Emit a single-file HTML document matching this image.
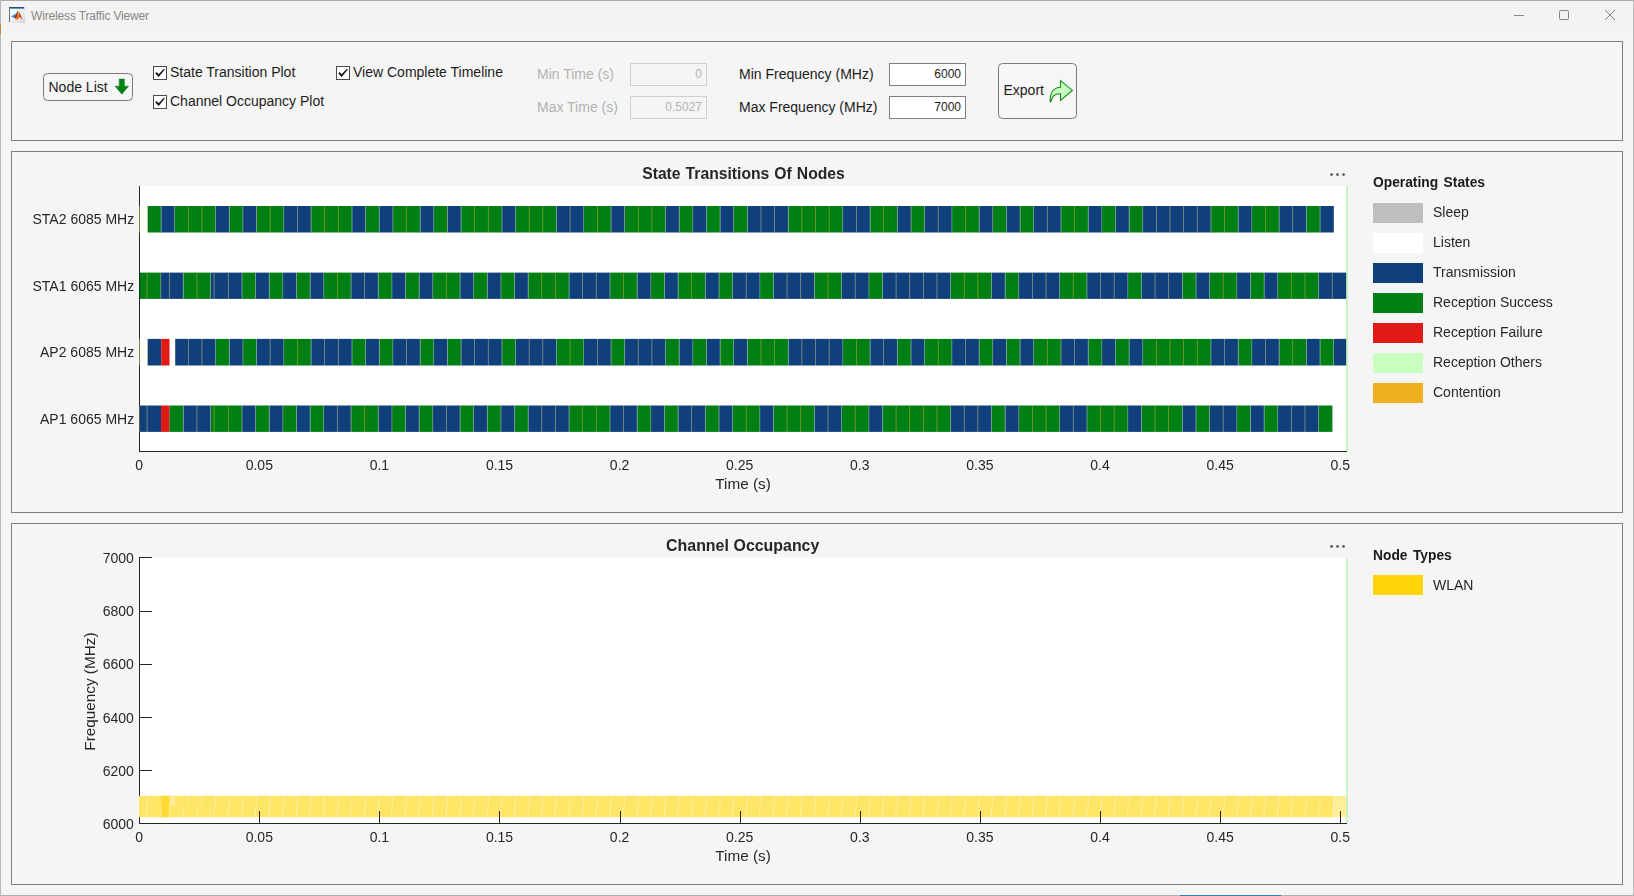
<!DOCTYPE html>
<html lang="en">
<head>
<meta charset="utf-8">
<title>Wireless Traffic Viewer</title>
<style>
html,body{margin:0;padding:0}
body{width:1634px;height:896px;overflow:hidden;position:relative;background:#F5F5F5;
 font-family:"Liberation Sans",sans-serif;font-size:14px;color:#1c1c1c}
.abs{position:absolute}
#titlebar{left:0;top:0;width:1634px;height:31px;background:#F3F3F3}
#wtitle{left:31px;top:8.7px;font-size:12px;letter-spacing:-0.16px;line-height:15px;color:#868686;white-space:nowrap}
.edge{background:#BDBDBD}
.panel{border:1px solid #7f7f7f;box-sizing:border-box;left:11px;width:1612px}
.cb{width:14px;height:14px;box-sizing:border-box;border:1px solid #4a4a4a;background:#fff}
.lbl{white-space:nowrap;line-height:16px;height:16px}
.dis{color:#b3b3b3}
.inp{box-sizing:border-box;width:77px;height:23px;border:1px solid #7f7f7f;background:#fff;
 font-size:12px;line-height:21px;text-align:right;padding-right:4px;color:#1c1c1c}
.inp.dis{border-color:#cfcfcf;background:#F5F5F5;color:#b3b3b3}
.btn{box-sizing:border-box;border:1px solid #7a7a7a;border-radius:4.5px;background:#F6F6F6}
</style>
</head>
<body>
<div id="titlebar" class="abs"></div>
<div class="abs edge" style="left:0;top:0;width:1634px;height:1px;background:#ABABAB"></div>
<div class="abs edge" style="left:0;top:0;width:1px;height:896px;background:#B9B9B9"></div>
<div class="abs edge" style="left:1633px;top:0;width:1px;height:896px"></div>
<div class="abs edge" style="left:0;top:895px;width:1634px;height:1px;background:#B0B0B0"></div>
<div class="abs" style="left:0;top:24px;width:1px;height:10px;background:#C08A3A"></div>
<div class="abs" style="left:1180px;top:895px;width:101px;height:1px;background:#3A78C0"></div>

<!-- window icon -->
<svg class="abs" style="left:9px;top:7px" width="16" height="16" viewBox="0 0 16 16">
 <defs>
  <linearGradient id="ig" x1="0" y1="0" x2="1" y2="1"><stop offset="0" stop-color="#FFFFFF"/><stop offset="0.45" stop-color="#F4F4F5"/><stop offset="1" stop-color="#CFD1D3"/></linearGradient>
  <linearGradient id="ib" x1="0" y1="0" x2="0" y2="1"><stop offset="0" stop-color="#4A8DCE"/><stop offset="1" stop-color="#D5E9F8"/></linearGradient>
 </defs>
 <rect x="0.6" y="1" width="15.4" height="15" fill="url(#ig)"/>
 <rect x="0" y="0" width="15.2" height="1.5" fill="#23507F"/>
 <rect x="1" y="1.5" width="14.2" height="1" fill="url(#ib)"/>
 <rect x="0" y="1.5" width="1" height="13.7" fill="#6A727C"/>
 <path d="M2.1 9.4 L5.0 7.8 L7.3 6.5 L8.2 4.4 L8.9 4.0 L8.1 7.6 L6.0 10.9 L4.4 10.6 Z" fill="#3A86C8"/>
 <path d="M8.2 4.6 L9.0 3.9 L8.8 8.0 L6.7 11.6 L5.5 10.9 L7.5 7.8 Z" fill="#8E1B12"/>
 <path d="M9.0 3.9 L10.3 5.8 L11.5 9.2 L9.2 11.8 L7.3 13.2 L6.4 11.6 L8.3 8.4 Z" fill="#E8641C"/>
 <path d="M9.1 4.0 L9.9 5.2 L9.5 8.4 L8.7 8.8 Z" fill="#FFD21A"/>
 <path d="M6.3 11.6 L8.5 12.2 L7.3 13.3 L6.5 13.0 Z" fill="#FFB400"/>
 <path d="M10.2 5.6 L11.0 6.2 L11.7 8.6 L12.5 10.2 L13.3 11.7 L12.6 12.0 L11.3 10.2 L10.6 9.8 Z" fill="#C4241C"/>
</svg>
<div id="wtitle" class="abs">Wireless Traffic Viewer</div>

<!-- window controls -->
<svg class="abs" style="left:1500px;top:0" width="130" height="31" viewBox="1500 0 130 31">
 <rect x="1514" y="15" width="10" height="1" fill="#868686"/>
 <rect x="1559.5" y="10.5" width="9" height="9" rx="1.3" ry="1.3" fill="none" stroke="#868686" stroke-width="1"/>
 <path d="M1605 10 L1615 20 M1615 10 L1605 20" stroke="#868686" stroke-width="1" fill="none"/>
</svg>

<!-- toolbar panel -->
<div class="abs panel" style="top:41px;height:100px"></div>
<div class="abs panel" style="top:151px;height:362px"></div>
<div class="abs panel" style="top:523px;height:362px"></div>

<div class="abs btn" style="left:43px;top:73px;width:90px;height:28px"></div>
<div class="abs lbl" style="left:48.5px;top:79px">Node List</div>
<svg class="abs" style="left:114px;top:78px" width="16" height="18" viewBox="0 0 16 18">
 <path d="M5.2 1 H10.4 V8.2 H14.6 L7.8 16.2 L1 8.2 H5.2 Z" fill="#058215" stroke="#058215" stroke-width="0.5" stroke-linejoin="round"/>
</svg>

<div class="abs cb" style="left:153px;top:66px"></div>
<div class="abs cb" style="left:153px;top:95px"></div>
<div class="abs cb" style="left:336px;top:66px"></div>
<svg class="abs" style="left:153px;top:66px" width="14" height="14" viewBox="0 0 14 14"><path d="M2.3 7.5 L3.7 6.1 L5.6 8.3 L10.9 2.7 L11.8 3.4 L5.7 11.1 Z" fill="#141414"/></svg>
<svg class="abs" style="left:153px;top:95px" width="14" height="14" viewBox="0 0 14 14"><path d="M2.3 7.5 L3.7 6.1 L5.6 8.3 L10.9 2.7 L11.8 3.4 L5.7 11.1 Z" fill="#141414"/></svg>
<svg class="abs" style="left:336px;top:66px" width="14" height="14" viewBox="0 0 14 14"><path d="M2.3 7.5 L3.7 6.1 L5.6 8.3 L10.9 2.7 L11.8 3.4 L5.7 11.1 Z" fill="#141414"/></svg>
<div class="abs lbl" style="left:170px;top:64px">State Transition Plot</div>
<div class="abs lbl" style="left:170px;top:93px">Channel Occupancy Plot</div>
<div class="abs lbl" style="left:353px;top:64px">View Complete Timeline</div>

<div class="abs lbl dis" style="left:537px;top:66px">Min Time (s)</div>
<div class="abs lbl dis" style="left:537px;top:99px">Max Time (s)</div>
<div class="abs inp dis" style="left:630px;top:63px">0</div>
<div class="abs inp dis" style="left:630px;top:96px">0.5027</div>

<div class="abs lbl" style="left:739px;top:66px">Min Frequency (MHz)</div>
<div class="abs lbl" style="left:739px;top:99px">Max Frequency (MHz)</div>
<div class="abs inp" style="left:889px;top:63px">6000</div>
<div class="abs inp" style="left:889px;top:96px">7000</div>

<div class="abs btn" style="left:998px;top:63px;width:79px;height:56px"></div>
<div class="abs lbl" style="left:1003.5px;top:82px">Export</div>
<svg class="abs" style="left:1046px;top:77px" width="30" height="28" viewBox="1046 77 30 28">
 <path d="M1060.5 80.6 L1072.4 90.4 L1060.5 100.3 L1060.5 93.8 C1055.5 93.4 1052 96 1050.9 101.6 L1050.2 101.6 C1049.6 93 1053.5 87.4 1060.5 87.2 Z" fill="#C6FFBF" stroke="#0C8A1C" stroke-width="1.05" stroke-linejoin="miter"/>
</svg>

<svg width="1634" height="896" viewBox="0 0 1634 896" style="position:absolute;left:0;top:0;will-change:transform" shape-rendering="auto">
<style>.tk{font-family:"Liberation Sans",sans-serif;font-size:14px;fill:#262626}.tb{font-family:"Liberation Sans",sans-serif;font-size:15.7px;font-weight:bold;fill:#262626}.al{font-family:"Liberation Sans",sans-serif;font-size:15.3px;fill:#262626}.lg{font-family:"Liberation Sans",sans-serif;font-size:14px;fill:#262626}.lb{font-family:"Liberation Sans",sans-serif;font-size:13.8px;font-weight:bold;fill:#1a1a1a;word-spacing:1.6px}</style>
<rect x="139" y="186" width="1208" height="266" fill="#ffffff"/>
<rect x="147.60" y="206.00" width="13.63" height="26.50" fill="#008014"/>
<rect x="161.23" y="206.00" width="13.63" height="26.50" fill="#10407C"/>
<rect x="174.87" y="206.00" width="40.90" height="26.50" fill="#008014"/>
<rect x="215.77" y="206.00" width="13.63" height="26.50" fill="#10407C"/>
<rect x="229.41" y="206.00" width="13.63" height="26.50" fill="#008014"/>
<rect x="243.04" y="206.00" width="13.63" height="26.50" fill="#10407C"/>
<rect x="256.68" y="206.00" width="27.27" height="26.50" fill="#008014"/>
<rect x="283.94" y="206.00" width="27.27" height="26.50" fill="#10407C"/>
<rect x="311.21" y="206.00" width="40.90" height="26.50" fill="#008014"/>
<rect x="352.12" y="206.00" width="13.63" height="26.50" fill="#10407C"/>
<rect x="365.75" y="206.00" width="13.63" height="26.50" fill="#008014"/>
<rect x="379.39" y="206.00" width="13.63" height="26.50" fill="#10407C"/>
<rect x="393.02" y="206.00" width="27.27" height="26.50" fill="#008014"/>
<rect x="420.29" y="206.00" width="13.63" height="26.50" fill="#10407C"/>
<rect x="433.92" y="206.00" width="13.63" height="26.50" fill="#008014"/>
<rect x="447.56" y="206.00" width="13.63" height="26.50" fill="#10407C"/>
<rect x="461.19" y="206.00" width="40.90" height="26.50" fill="#008014"/>
<rect x="502.10" y="206.00" width="13.63" height="26.50" fill="#10407C"/>
<rect x="515.73" y="206.00" width="40.90" height="26.50" fill="#008014"/>
<rect x="556.63" y="206.00" width="27.27" height="26.50" fill="#10407C"/>
<rect x="583.90" y="206.00" width="27.27" height="26.50" fill="#008014"/>
<rect x="611.17" y="206.00" width="13.63" height="26.50" fill="#10407C"/>
<rect x="624.81" y="206.00" width="40.90" height="26.50" fill="#008014"/>
<rect x="665.71" y="206.00" width="13.63" height="26.50" fill="#10407C"/>
<rect x="679.34" y="206.00" width="13.63" height="26.50" fill="#008014"/>
<rect x="692.98" y="206.00" width="13.63" height="26.50" fill="#10407C"/>
<rect x="706.61" y="206.00" width="13.63" height="26.50" fill="#008014"/>
<rect x="720.25" y="206.00" width="13.63" height="26.50" fill="#10407C"/>
<rect x="733.88" y="206.00" width="13.63" height="26.50" fill="#008014"/>
<rect x="747.52" y="206.00" width="40.90" height="26.50" fill="#10407C"/>
<rect x="788.42" y="206.00" width="54.54" height="26.50" fill="#008014"/>
<rect x="842.96" y="206.00" width="27.27" height="26.50" fill="#10407C"/>
<rect x="870.23" y="206.00" width="27.27" height="26.50" fill="#008014"/>
<rect x="897.50" y="206.00" width="13.63" height="26.50" fill="#10407C"/>
<rect x="911.13" y="206.00" width="13.63" height="26.50" fill="#008014"/>
<rect x="924.77" y="206.00" width="27.27" height="26.50" fill="#10407C"/>
<rect x="952.03" y="206.00" width="27.27" height="26.50" fill="#008014"/>
<rect x="979.30" y="206.00" width="13.63" height="26.50" fill="#10407C"/>
<rect x="992.94" y="206.00" width="13.63" height="26.50" fill="#008014"/>
<rect x="1006.57" y="206.00" width="13.63" height="26.50" fill="#10407C"/>
<rect x="1020.21" y="206.00" width="13.63" height="26.50" fill="#008014"/>
<rect x="1033.84" y="206.00" width="27.27" height="26.50" fill="#10407C"/>
<rect x="1061.11" y="206.00" width="27.27" height="26.50" fill="#008014"/>
<rect x="1088.38" y="206.00" width="13.63" height="26.50" fill="#10407C"/>
<rect x="1102.01" y="206.00" width="13.63" height="26.50" fill="#008014"/>
<rect x="1115.65" y="206.00" width="13.63" height="26.50" fill="#10407C"/>
<rect x="1129.28" y="206.00" width="13.63" height="26.50" fill="#008014"/>
<rect x="1142.92" y="206.00" width="68.17" height="26.50" fill="#10407C"/>
<rect x="1211.09" y="206.00" width="27.27" height="26.50" fill="#008014"/>
<rect x="1238.36" y="206.00" width="13.63" height="26.50" fill="#10407C"/>
<rect x="1251.99" y="206.00" width="27.27" height="26.50" fill="#008014"/>
<rect x="1279.26" y="206.00" width="27.27" height="26.50" fill="#10407C"/>
<rect x="1306.53" y="206.00" width="13.63" height="26.50" fill="#008014"/>
<rect x="1320.17" y="206.00" width="13.63" height="26.50" fill="#10407C"/>
<rect x="160.68" y="206.00" width="0.7" height="26.50" fill="#9DB3A6" opacity="0.80"/>
<rect x="174.32" y="206.00" width="0.7" height="26.50" fill="#9DB3A6" opacity="0.80"/>
<rect x="187.95" y="206.00" width="0.7" height="26.50" fill="#A9A628" opacity="0.85"/>
<rect x="201.59" y="206.00" width="0.7" height="26.50" fill="#A9A628" opacity="0.85"/>
<rect x="215.22" y="206.00" width="0.7" height="26.50" fill="#9DB3A6" opacity="0.80"/>
<rect x="228.86" y="206.00" width="0.7" height="26.50" fill="#9DB3A6" opacity="0.80"/>
<rect x="242.49" y="206.00" width="0.7" height="26.50" fill="#9DB3A6" opacity="0.80"/>
<rect x="256.13" y="206.00" width="0.7" height="26.50" fill="#9DB3A6" opacity="0.80"/>
<rect x="269.76" y="206.00" width="0.7" height="26.50" fill="#A9A628" opacity="0.85"/>
<rect x="283.39" y="206.00" width="0.7" height="26.50" fill="#9DB3A6" opacity="0.80"/>
<rect x="297.03" y="206.00" width="0.7" height="26.50" fill="#B9B884" opacity="0.80"/>
<rect x="310.66" y="206.00" width="0.7" height="26.50" fill="#9DB3A6" opacity="0.80"/>
<rect x="324.30" y="206.00" width="0.7" height="26.50" fill="#A9A628" opacity="0.85"/>
<rect x="337.93" y="206.00" width="0.7" height="26.50" fill="#A9A628" opacity="0.85"/>
<rect x="351.57" y="206.00" width="0.7" height="26.50" fill="#9DB3A6" opacity="0.80"/>
<rect x="365.20" y="206.00" width="0.7" height="26.50" fill="#9DB3A6" opacity="0.80"/>
<rect x="378.84" y="206.00" width="0.7" height="26.50" fill="#9DB3A6" opacity="0.80"/>
<rect x="392.47" y="206.00" width="0.7" height="26.50" fill="#9DB3A6" opacity="0.80"/>
<rect x="406.11" y="206.00" width="0.7" height="26.50" fill="#A9A628" opacity="0.85"/>
<rect x="419.74" y="206.00" width="0.7" height="26.50" fill="#9DB3A6" opacity="0.80"/>
<rect x="433.37" y="206.00" width="0.7" height="26.50" fill="#9DB3A6" opacity="0.80"/>
<rect x="447.01" y="206.00" width="0.7" height="26.50" fill="#9DB3A6" opacity="0.80"/>
<rect x="460.64" y="206.00" width="0.7" height="26.50" fill="#9DB3A6" opacity="0.80"/>
<rect x="474.28" y="206.00" width="0.7" height="26.50" fill="#A9A628" opacity="0.85"/>
<rect x="487.91" y="206.00" width="0.7" height="26.50" fill="#A9A628" opacity="0.85"/>
<rect x="501.55" y="206.00" width="0.7" height="26.50" fill="#9DB3A6" opacity="0.80"/>
<rect x="515.18" y="206.00" width="0.7" height="26.50" fill="#9DB3A6" opacity="0.80"/>
<rect x="528.82" y="206.00" width="0.7" height="26.50" fill="#A9A628" opacity="0.85"/>
<rect x="542.45" y="206.00" width="0.7" height="26.50" fill="#A9A628" opacity="0.85"/>
<rect x="556.08" y="206.00" width="0.7" height="26.50" fill="#9DB3A6" opacity="0.80"/>
<rect x="569.72" y="206.00" width="0.7" height="26.50" fill="#B9B884" opacity="0.80"/>
<rect x="583.35" y="206.00" width="0.7" height="26.50" fill="#9DB3A6" opacity="0.80"/>
<rect x="596.99" y="206.00" width="0.7" height="26.50" fill="#A9A628" opacity="0.85"/>
<rect x="610.62" y="206.00" width="0.7" height="26.50" fill="#9DB3A6" opacity="0.80"/>
<rect x="624.26" y="206.00" width="0.7" height="26.50" fill="#9DB3A6" opacity="0.80"/>
<rect x="637.89" y="206.00" width="0.7" height="26.50" fill="#A9A628" opacity="0.85"/>
<rect x="651.53" y="206.00" width="0.7" height="26.50" fill="#A9A628" opacity="0.85"/>
<rect x="665.16" y="206.00" width="0.7" height="26.50" fill="#9DB3A6" opacity="0.80"/>
<rect x="678.79" y="206.00" width="0.7" height="26.50" fill="#9DB3A6" opacity="0.80"/>
<rect x="692.43" y="206.00" width="0.7" height="26.50" fill="#9DB3A6" opacity="0.80"/>
<rect x="706.06" y="206.00" width="0.7" height="26.50" fill="#9DB3A6" opacity="0.80"/>
<rect x="719.70" y="206.00" width="0.7" height="26.50" fill="#9DB3A6" opacity="0.80"/>
<rect x="733.33" y="206.00" width="0.7" height="26.50" fill="#9DB3A6" opacity="0.80"/>
<rect x="746.97" y="206.00" width="0.7" height="26.50" fill="#9DB3A6" opacity="0.80"/>
<rect x="760.60" y="206.00" width="0.7" height="26.50" fill="#B9B884" opacity="0.80"/>
<rect x="774.24" y="206.00" width="0.7" height="26.50" fill="#B9B884" opacity="0.80"/>
<rect x="787.87" y="206.00" width="0.7" height="26.50" fill="#9DB3A6" opacity="0.80"/>
<rect x="801.51" y="206.00" width="0.7" height="26.50" fill="#A9A628" opacity="0.85"/>
<rect x="815.14" y="206.00" width="0.7" height="26.50" fill="#A9A628" opacity="0.85"/>
<rect x="828.77" y="206.00" width="0.7" height="26.50" fill="#A9A628" opacity="0.85"/>
<rect x="842.41" y="206.00" width="0.7" height="26.50" fill="#9DB3A6" opacity="0.80"/>
<rect x="856.04" y="206.00" width="0.7" height="26.50" fill="#B9B884" opacity="0.80"/>
<rect x="869.68" y="206.00" width="0.7" height="26.50" fill="#9DB3A6" opacity="0.80"/>
<rect x="883.31" y="206.00" width="0.7" height="26.50" fill="#A9A628" opacity="0.85"/>
<rect x="896.95" y="206.00" width="0.7" height="26.50" fill="#9DB3A6" opacity="0.80"/>
<rect x="910.58" y="206.00" width="0.7" height="26.50" fill="#9DB3A6" opacity="0.80"/>
<rect x="924.22" y="206.00" width="0.7" height="26.50" fill="#9DB3A6" opacity="0.80"/>
<rect x="937.85" y="206.00" width="0.7" height="26.50" fill="#B9B884" opacity="0.80"/>
<rect x="951.48" y="206.00" width="0.7" height="26.50" fill="#9DB3A6" opacity="0.80"/>
<rect x="965.12" y="206.00" width="0.7" height="26.50" fill="#A9A628" opacity="0.85"/>
<rect x="978.75" y="206.00" width="0.7" height="26.50" fill="#9DB3A6" opacity="0.80"/>
<rect x="992.39" y="206.00" width="0.7" height="26.50" fill="#9DB3A6" opacity="0.80"/>
<rect x="1006.02" y="206.00" width="0.7" height="26.50" fill="#9DB3A6" opacity="0.80"/>
<rect x="1019.66" y="206.00" width="0.7" height="26.50" fill="#9DB3A6" opacity="0.80"/>
<rect x="1033.29" y="206.00" width="0.7" height="26.50" fill="#9DB3A6" opacity="0.80"/>
<rect x="1046.93" y="206.00" width="0.7" height="26.50" fill="#B9B884" opacity="0.80"/>
<rect x="1060.56" y="206.00" width="0.7" height="26.50" fill="#9DB3A6" opacity="0.80"/>
<rect x="1074.19" y="206.00" width="0.7" height="26.50" fill="#A9A628" opacity="0.85"/>
<rect x="1087.83" y="206.00" width="0.7" height="26.50" fill="#9DB3A6" opacity="0.80"/>
<rect x="1101.46" y="206.00" width="0.7" height="26.50" fill="#9DB3A6" opacity="0.80"/>
<rect x="1115.10" y="206.00" width="0.7" height="26.50" fill="#9DB3A6" opacity="0.80"/>
<rect x="1128.73" y="206.00" width="0.7" height="26.50" fill="#9DB3A6" opacity="0.80"/>
<rect x="1142.37" y="206.00" width="0.7" height="26.50" fill="#9DB3A6" opacity="0.80"/>
<rect x="1156.00" y="206.00" width="0.7" height="26.50" fill="#B9B884" opacity="0.80"/>
<rect x="1169.64" y="206.00" width="0.7" height="26.50" fill="#B9B884" opacity="0.80"/>
<rect x="1183.27" y="206.00" width="0.7" height="26.50" fill="#B9B884" opacity="0.80"/>
<rect x="1196.91" y="206.00" width="0.7" height="26.50" fill="#B9B884" opacity="0.80"/>
<rect x="1210.54" y="206.00" width="0.7" height="26.50" fill="#9DB3A6" opacity="0.80"/>
<rect x="1224.17" y="206.00" width="0.7" height="26.50" fill="#A9A628" opacity="0.85"/>
<rect x="1237.81" y="206.00" width="0.7" height="26.50" fill="#9DB3A6" opacity="0.80"/>
<rect x="1251.44" y="206.00" width="0.7" height="26.50" fill="#9DB3A6" opacity="0.80"/>
<rect x="1265.08" y="206.00" width="0.7" height="26.50" fill="#A9A628" opacity="0.85"/>
<rect x="1278.71" y="206.00" width="0.7" height="26.50" fill="#9DB3A6" opacity="0.80"/>
<rect x="1292.35" y="206.00" width="0.7" height="26.50" fill="#B9B884" opacity="0.80"/>
<rect x="1305.98" y="206.00" width="0.7" height="26.50" fill="#9DB3A6" opacity="0.80"/>
<rect x="1319.62" y="206.00" width="0.7" height="26.50" fill="#9DB3A6" opacity="0.80"/>
<rect x="140.00" y="272.60" width="21.00" height="26.30" fill="#008014"/>
<rect x="161.00" y="272.60" width="22.40" height="26.30" fill="#10407C"/>
<rect x="183.40" y="272.60" width="27.40" height="26.30" fill="#008014"/>
<rect x="210.80" y="272.60" width="31.33" height="26.30" fill="#10407C"/>
<rect x="242.13" y="272.60" width="13.63" height="26.30" fill="#008014"/>
<rect x="255.76" y="272.60" width="13.63" height="26.30" fill="#10407C"/>
<rect x="269.39" y="272.60" width="13.63" height="26.30" fill="#008014"/>
<rect x="283.01" y="272.60" width="13.63" height="26.30" fill="#10407C"/>
<rect x="296.64" y="272.60" width="13.63" height="26.30" fill="#008014"/>
<rect x="310.27" y="272.60" width="13.63" height="26.30" fill="#10407C"/>
<rect x="323.90" y="272.60" width="27.26" height="26.30" fill="#008014"/>
<rect x="351.16" y="272.60" width="27.26" height="26.30" fill="#10407C"/>
<rect x="378.41" y="272.60" width="13.63" height="26.30" fill="#008014"/>
<rect x="392.04" y="272.60" width="13.63" height="26.30" fill="#10407C"/>
<rect x="405.67" y="272.60" width="13.63" height="26.30" fill="#008014"/>
<rect x="419.30" y="272.60" width="13.63" height="26.30" fill="#10407C"/>
<rect x="432.93" y="272.60" width="27.26" height="26.30" fill="#008014"/>
<rect x="460.18" y="272.60" width="13.63" height="26.30" fill="#10407C"/>
<rect x="473.81" y="272.60" width="13.63" height="26.30" fill="#008014"/>
<rect x="487.44" y="272.60" width="13.63" height="26.30" fill="#10407C"/>
<rect x="501.07" y="272.60" width="13.63" height="26.30" fill="#008014"/>
<rect x="514.70" y="272.60" width="13.63" height="26.30" fill="#10407C"/>
<rect x="528.32" y="272.60" width="40.89" height="26.30" fill="#008014"/>
<rect x="569.21" y="272.60" width="40.89" height="26.30" fill="#10407C"/>
<rect x="610.10" y="272.60" width="27.26" height="26.30" fill="#008014"/>
<rect x="637.35" y="272.60" width="13.63" height="26.30" fill="#10407C"/>
<rect x="650.98" y="272.60" width="13.63" height="26.30" fill="#008014"/>
<rect x="664.61" y="272.60" width="13.63" height="26.30" fill="#10407C"/>
<rect x="678.24" y="272.60" width="27.26" height="26.30" fill="#008014"/>
<rect x="705.49" y="272.60" width="13.63" height="26.30" fill="#10407C"/>
<rect x="719.12" y="272.60" width="13.63" height="26.30" fill="#008014"/>
<rect x="732.75" y="272.60" width="27.26" height="26.30" fill="#10407C"/>
<rect x="760.01" y="272.60" width="13.63" height="26.30" fill="#008014"/>
<rect x="773.64" y="272.60" width="40.89" height="26.30" fill="#10407C"/>
<rect x="814.52" y="272.60" width="27.26" height="26.30" fill="#008014"/>
<rect x="841.78" y="272.60" width="27.26" height="26.30" fill="#10407C"/>
<rect x="869.03" y="272.60" width="13.63" height="26.30" fill="#008014"/>
<rect x="882.66" y="272.60" width="68.14" height="26.30" fill="#10407C"/>
<rect x="950.80" y="272.60" width="40.89" height="26.30" fill="#008014"/>
<rect x="991.69" y="272.60" width="13.63" height="26.30" fill="#10407C"/>
<rect x="1005.32" y="272.60" width="13.63" height="26.30" fill="#008014"/>
<rect x="1018.95" y="272.60" width="40.89" height="26.30" fill="#10407C"/>
<rect x="1059.83" y="272.60" width="27.26" height="26.30" fill="#008014"/>
<rect x="1087.09" y="272.60" width="40.89" height="26.30" fill="#10407C"/>
<rect x="1127.97" y="272.60" width="13.63" height="26.30" fill="#008014"/>
<rect x="1141.60" y="272.60" width="40.89" height="26.30" fill="#10407C"/>
<rect x="1182.49" y="272.60" width="13.63" height="26.30" fill="#008014"/>
<rect x="1196.12" y="272.60" width="13.63" height="26.30" fill="#10407C"/>
<rect x="1209.74" y="272.60" width="27.26" height="26.30" fill="#008014"/>
<rect x="1237.00" y="272.60" width="13.63" height="26.30" fill="#10407C"/>
<rect x="1250.63" y="272.60" width="13.63" height="26.30" fill="#008014"/>
<rect x="1264.26" y="272.60" width="13.63" height="26.30" fill="#10407C"/>
<rect x="1277.89" y="272.60" width="40.89" height="26.30" fill="#008014"/>
<rect x="1318.77" y="272.60" width="27.73" height="26.30" fill="#10407C"/>
<rect x="146.75" y="272.60" width="0.7" height="26.30" fill="#A9A628" opacity="0.85"/>
<rect x="160.45" y="272.60" width="0.7" height="26.30" fill="#9DB3A6" opacity="0.80"/>
<rect x="168.95" y="272.60" width="0.7" height="26.30" fill="#B9B884" opacity="0.80"/>
<rect x="182.85" y="272.60" width="0.7" height="26.30" fill="#9DB3A6" opacity="0.80"/>
<rect x="196.55" y="272.60" width="0.7" height="26.30" fill="#A9A628" opacity="0.85"/>
<rect x="210.25" y="272.60" width="0.7" height="26.30" fill="#9DB3A6" opacity="0.80"/>
<rect x="213.75" y="272.60" width="0.7" height="26.30" fill="#B9B884" opacity="0.80"/>
<rect x="227.95" y="272.60" width="0.7" height="26.30" fill="#B9B884" opacity="0.80"/>
<rect x="241.58" y="272.60" width="0.7" height="26.30" fill="#9DB3A6" opacity="0.80"/>
<rect x="255.21" y="272.60" width="0.7" height="26.30" fill="#9DB3A6" opacity="0.80"/>
<rect x="268.84" y="272.60" width="0.7" height="26.30" fill="#9DB3A6" opacity="0.80"/>
<rect x="282.46" y="272.60" width="0.7" height="26.30" fill="#9DB3A6" opacity="0.80"/>
<rect x="296.09" y="272.60" width="0.7" height="26.30" fill="#9DB3A6" opacity="0.80"/>
<rect x="309.72" y="272.60" width="0.7" height="26.30" fill="#9DB3A6" opacity="0.80"/>
<rect x="323.35" y="272.60" width="0.7" height="26.30" fill="#9DB3A6" opacity="0.80"/>
<rect x="336.98" y="272.60" width="0.7" height="26.30" fill="#A9A628" opacity="0.85"/>
<rect x="350.61" y="272.60" width="0.7" height="26.30" fill="#9DB3A6" opacity="0.80"/>
<rect x="364.23" y="272.60" width="0.7" height="26.30" fill="#B9B884" opacity="0.80"/>
<rect x="377.86" y="272.60" width="0.7" height="26.30" fill="#9DB3A6" opacity="0.80"/>
<rect x="391.49" y="272.60" width="0.7" height="26.30" fill="#9DB3A6" opacity="0.80"/>
<rect x="405.12" y="272.60" width="0.7" height="26.30" fill="#9DB3A6" opacity="0.80"/>
<rect x="418.75" y="272.60" width="0.7" height="26.30" fill="#9DB3A6" opacity="0.80"/>
<rect x="432.38" y="272.60" width="0.7" height="26.30" fill="#9DB3A6" opacity="0.80"/>
<rect x="446.00" y="272.60" width="0.7" height="26.30" fill="#A9A628" opacity="0.85"/>
<rect x="459.63" y="272.60" width="0.7" height="26.30" fill="#9DB3A6" opacity="0.80"/>
<rect x="473.26" y="272.60" width="0.7" height="26.30" fill="#9DB3A6" opacity="0.80"/>
<rect x="486.89" y="272.60" width="0.7" height="26.30" fill="#9DB3A6" opacity="0.80"/>
<rect x="500.52" y="272.60" width="0.7" height="26.30" fill="#9DB3A6" opacity="0.80"/>
<rect x="514.15" y="272.60" width="0.7" height="26.30" fill="#9DB3A6" opacity="0.80"/>
<rect x="527.77" y="272.60" width="0.7" height="26.30" fill="#9DB3A6" opacity="0.80"/>
<rect x="541.40" y="272.60" width="0.7" height="26.30" fill="#A9A628" opacity="0.85"/>
<rect x="555.03" y="272.60" width="0.7" height="26.30" fill="#A9A628" opacity="0.85"/>
<rect x="568.66" y="272.60" width="0.7" height="26.30" fill="#9DB3A6" opacity="0.80"/>
<rect x="582.29" y="272.60" width="0.7" height="26.30" fill="#B9B884" opacity="0.80"/>
<rect x="595.92" y="272.60" width="0.7" height="26.30" fill="#B9B884" opacity="0.80"/>
<rect x="609.55" y="272.60" width="0.7" height="26.30" fill="#9DB3A6" opacity="0.80"/>
<rect x="623.17" y="272.60" width="0.7" height="26.30" fill="#A9A628" opacity="0.85"/>
<rect x="636.80" y="272.60" width="0.7" height="26.30" fill="#9DB3A6" opacity="0.80"/>
<rect x="650.43" y="272.60" width="0.7" height="26.30" fill="#9DB3A6" opacity="0.80"/>
<rect x="664.06" y="272.60" width="0.7" height="26.30" fill="#9DB3A6" opacity="0.80"/>
<rect x="677.69" y="272.60" width="0.7" height="26.30" fill="#9DB3A6" opacity="0.80"/>
<rect x="691.32" y="272.60" width="0.7" height="26.30" fill="#A9A628" opacity="0.85"/>
<rect x="704.94" y="272.60" width="0.7" height="26.30" fill="#9DB3A6" opacity="0.80"/>
<rect x="718.57" y="272.60" width="0.7" height="26.30" fill="#9DB3A6" opacity="0.80"/>
<rect x="732.20" y="272.60" width="0.7" height="26.30" fill="#9DB3A6" opacity="0.80"/>
<rect x="745.83" y="272.60" width="0.7" height="26.30" fill="#B9B884" opacity="0.80"/>
<rect x="759.46" y="272.60" width="0.7" height="26.30" fill="#9DB3A6" opacity="0.80"/>
<rect x="773.09" y="272.60" width="0.7" height="26.30" fill="#9DB3A6" opacity="0.80"/>
<rect x="786.71" y="272.60" width="0.7" height="26.30" fill="#B9B884" opacity="0.80"/>
<rect x="800.34" y="272.60" width="0.7" height="26.30" fill="#B9B884" opacity="0.80"/>
<rect x="813.97" y="272.60" width="0.7" height="26.30" fill="#9DB3A6" opacity="0.80"/>
<rect x="827.60" y="272.60" width="0.7" height="26.30" fill="#A9A628" opacity="0.85"/>
<rect x="841.23" y="272.60" width="0.7" height="26.30" fill="#9DB3A6" opacity="0.80"/>
<rect x="854.86" y="272.60" width="0.7" height="26.30" fill="#B9B884" opacity="0.80"/>
<rect x="868.48" y="272.60" width="0.7" height="26.30" fill="#9DB3A6" opacity="0.80"/>
<rect x="882.11" y="272.60" width="0.7" height="26.30" fill="#9DB3A6" opacity="0.80"/>
<rect x="895.74" y="272.60" width="0.7" height="26.30" fill="#B9B884" opacity="0.80"/>
<rect x="909.37" y="272.60" width="0.7" height="26.30" fill="#B9B884" opacity="0.80"/>
<rect x="923.00" y="272.60" width="0.7" height="26.30" fill="#B9B884" opacity="0.80"/>
<rect x="936.63" y="272.60" width="0.7" height="26.30" fill="#B9B884" opacity="0.80"/>
<rect x="950.25" y="272.60" width="0.7" height="26.30" fill="#9DB3A6" opacity="0.80"/>
<rect x="963.88" y="272.60" width="0.7" height="26.30" fill="#A9A628" opacity="0.85"/>
<rect x="977.51" y="272.60" width="0.7" height="26.30" fill="#A9A628" opacity="0.85"/>
<rect x="991.14" y="272.60" width="0.7" height="26.30" fill="#9DB3A6" opacity="0.80"/>
<rect x="1004.77" y="272.60" width="0.7" height="26.30" fill="#9DB3A6" opacity="0.80"/>
<rect x="1018.40" y="272.60" width="0.7" height="26.30" fill="#9DB3A6" opacity="0.80"/>
<rect x="1032.03" y="272.60" width="0.7" height="26.30" fill="#B9B884" opacity="0.80"/>
<rect x="1045.65" y="272.60" width="0.7" height="26.30" fill="#B9B884" opacity="0.80"/>
<rect x="1059.28" y="272.60" width="0.7" height="26.30" fill="#9DB3A6" opacity="0.80"/>
<rect x="1072.91" y="272.60" width="0.7" height="26.30" fill="#A9A628" opacity="0.85"/>
<rect x="1086.54" y="272.60" width="0.7" height="26.30" fill="#9DB3A6" opacity="0.80"/>
<rect x="1100.17" y="272.60" width="0.7" height="26.30" fill="#B9B884" opacity="0.80"/>
<rect x="1113.80" y="272.60" width="0.7" height="26.30" fill="#B9B884" opacity="0.80"/>
<rect x="1127.42" y="272.60" width="0.7" height="26.30" fill="#9DB3A6" opacity="0.80"/>
<rect x="1141.05" y="272.60" width="0.7" height="26.30" fill="#9DB3A6" opacity="0.80"/>
<rect x="1154.68" y="272.60" width="0.7" height="26.30" fill="#B9B884" opacity="0.80"/>
<rect x="1168.31" y="272.60" width="0.7" height="26.30" fill="#B9B884" opacity="0.80"/>
<rect x="1181.94" y="272.60" width="0.7" height="26.30" fill="#9DB3A6" opacity="0.80"/>
<rect x="1195.57" y="272.60" width="0.7" height="26.30" fill="#9DB3A6" opacity="0.80"/>
<rect x="1209.19" y="272.60" width="0.7" height="26.30" fill="#9DB3A6" opacity="0.80"/>
<rect x="1222.82" y="272.60" width="0.7" height="26.30" fill="#A9A628" opacity="0.85"/>
<rect x="1236.45" y="272.60" width="0.7" height="26.30" fill="#9DB3A6" opacity="0.80"/>
<rect x="1250.08" y="272.60" width="0.7" height="26.30" fill="#9DB3A6" opacity="0.80"/>
<rect x="1263.71" y="272.60" width="0.7" height="26.30" fill="#9DB3A6" opacity="0.80"/>
<rect x="1277.34" y="272.60" width="0.7" height="26.30" fill="#9DB3A6" opacity="0.80"/>
<rect x="1290.96" y="272.60" width="0.7" height="26.30" fill="#A9A628" opacity="0.85"/>
<rect x="1304.59" y="272.60" width="0.7" height="26.30" fill="#A9A628" opacity="0.85"/>
<rect x="1318.22" y="272.60" width="0.7" height="26.30" fill="#9DB3A6" opacity="0.80"/>
<rect x="1331.85" y="272.60" width="0.7" height="26.30" fill="#B9B884" opacity="0.80"/>
<rect x="147.60" y="338.90" width="13.63" height="26.60" fill="#10407C"/>
<rect x="161.23" y="338.90" width="8.27" height="26.60" fill="#E01A14"/>
<rect x="175.20" y="338.90" width="40.57" height="26.60" fill="#10407C"/>
<rect x="215.77" y="338.90" width="13.63" height="26.60" fill="#008014"/>
<rect x="229.41" y="338.90" width="13.63" height="26.60" fill="#10407C"/>
<rect x="243.04" y="338.90" width="13.63" height="26.60" fill="#008014"/>
<rect x="256.68" y="338.90" width="27.27" height="26.60" fill="#10407C"/>
<rect x="283.94" y="338.90" width="27.27" height="26.60" fill="#008014"/>
<rect x="311.21" y="338.90" width="40.90" height="26.60" fill="#10407C"/>
<rect x="352.12" y="338.90" width="13.63" height="26.60" fill="#008014"/>
<rect x="365.75" y="338.90" width="13.63" height="26.60" fill="#10407C"/>
<rect x="379.39" y="338.90" width="13.63" height="26.60" fill="#008014"/>
<rect x="393.02" y="338.90" width="27.27" height="26.60" fill="#10407C"/>
<rect x="420.29" y="338.90" width="13.63" height="26.60" fill="#008014"/>
<rect x="433.92" y="338.90" width="13.63" height="26.60" fill="#10407C"/>
<rect x="447.56" y="338.90" width="13.63" height="26.60" fill="#008014"/>
<rect x="461.19" y="338.90" width="40.90" height="26.60" fill="#10407C"/>
<rect x="502.10" y="338.90" width="13.63" height="26.60" fill="#008014"/>
<rect x="515.73" y="338.90" width="40.90" height="26.60" fill="#10407C"/>
<rect x="556.63" y="338.90" width="27.27" height="26.60" fill="#008014"/>
<rect x="583.90" y="338.90" width="27.27" height="26.60" fill="#10407C"/>
<rect x="611.17" y="338.90" width="13.63" height="26.60" fill="#008014"/>
<rect x="624.81" y="338.90" width="40.90" height="26.60" fill="#10407C"/>
<rect x="665.71" y="338.90" width="13.63" height="26.60" fill="#008014"/>
<rect x="679.34" y="338.90" width="13.63" height="26.60" fill="#10407C"/>
<rect x="692.98" y="338.90" width="13.63" height="26.60" fill="#008014"/>
<rect x="706.61" y="338.90" width="13.63" height="26.60" fill="#10407C"/>
<rect x="720.25" y="338.90" width="13.63" height="26.60" fill="#008014"/>
<rect x="733.88" y="338.90" width="13.63" height="26.60" fill="#10407C"/>
<rect x="747.52" y="338.90" width="40.90" height="26.60" fill="#008014"/>
<rect x="788.42" y="338.90" width="54.54" height="26.60" fill="#10407C"/>
<rect x="842.96" y="338.90" width="27.27" height="26.60" fill="#008014"/>
<rect x="870.23" y="338.90" width="27.27" height="26.60" fill="#10407C"/>
<rect x="897.50" y="338.90" width="13.63" height="26.60" fill="#008014"/>
<rect x="911.13" y="338.90" width="13.63" height="26.60" fill="#10407C"/>
<rect x="924.77" y="338.90" width="27.27" height="26.60" fill="#008014"/>
<rect x="952.03" y="338.90" width="27.27" height="26.60" fill="#10407C"/>
<rect x="979.30" y="338.90" width="13.63" height="26.60" fill="#008014"/>
<rect x="992.94" y="338.90" width="13.63" height="26.60" fill="#10407C"/>
<rect x="1006.57" y="338.90" width="13.63" height="26.60" fill="#008014"/>
<rect x="1020.21" y="338.90" width="13.63" height="26.60" fill="#10407C"/>
<rect x="1033.84" y="338.90" width="27.27" height="26.60" fill="#008014"/>
<rect x="1061.11" y="338.90" width="27.27" height="26.60" fill="#10407C"/>
<rect x="1088.38" y="338.90" width="13.63" height="26.60" fill="#008014"/>
<rect x="1102.01" y="338.90" width="13.63" height="26.60" fill="#10407C"/>
<rect x="1115.65" y="338.90" width="13.63" height="26.60" fill="#008014"/>
<rect x="1129.28" y="338.90" width="13.63" height="26.60" fill="#10407C"/>
<rect x="1142.92" y="338.90" width="68.17" height="26.60" fill="#008014"/>
<rect x="1211.09" y="338.90" width="27.27" height="26.60" fill="#10407C"/>
<rect x="1238.36" y="338.90" width="13.63" height="26.60" fill="#008014"/>
<rect x="1251.99" y="338.90" width="27.27" height="26.60" fill="#10407C"/>
<rect x="1279.26" y="338.90" width="27.27" height="26.60" fill="#008014"/>
<rect x="1306.53" y="338.90" width="13.63" height="26.60" fill="#10407C"/>
<rect x="1320.17" y="338.90" width="13.63" height="26.60" fill="#008014"/>
<rect x="1333.80" y="338.90" width="12.70" height="26.60" fill="#10407C"/>
<rect x="187.95" y="338.90" width="0.7" height="26.60" fill="#B9B884" opacity="0.80"/>
<rect x="201.59" y="338.90" width="0.7" height="26.60" fill="#B9B884" opacity="0.80"/>
<rect x="215.22" y="338.90" width="0.7" height="26.60" fill="#9DB3A6" opacity="0.80"/>
<rect x="228.86" y="338.90" width="0.7" height="26.60" fill="#9DB3A6" opacity="0.80"/>
<rect x="242.49" y="338.90" width="0.7" height="26.60" fill="#9DB3A6" opacity="0.80"/>
<rect x="256.13" y="338.90" width="0.7" height="26.60" fill="#9DB3A6" opacity="0.80"/>
<rect x="269.76" y="338.90" width="0.7" height="26.60" fill="#B9B884" opacity="0.80"/>
<rect x="283.39" y="338.90" width="0.7" height="26.60" fill="#9DB3A6" opacity="0.80"/>
<rect x="297.03" y="338.90" width="0.7" height="26.60" fill="#A9A628" opacity="0.85"/>
<rect x="310.66" y="338.90" width="0.7" height="26.60" fill="#9DB3A6" opacity="0.80"/>
<rect x="324.30" y="338.90" width="0.7" height="26.60" fill="#B9B884" opacity="0.80"/>
<rect x="337.93" y="338.90" width="0.7" height="26.60" fill="#B9B884" opacity="0.80"/>
<rect x="351.57" y="338.90" width="0.7" height="26.60" fill="#9DB3A6" opacity="0.80"/>
<rect x="365.20" y="338.90" width="0.7" height="26.60" fill="#9DB3A6" opacity="0.80"/>
<rect x="378.84" y="338.90" width="0.7" height="26.60" fill="#9DB3A6" opacity="0.80"/>
<rect x="392.47" y="338.90" width="0.7" height="26.60" fill="#9DB3A6" opacity="0.80"/>
<rect x="406.11" y="338.90" width="0.7" height="26.60" fill="#B9B884" opacity="0.80"/>
<rect x="419.74" y="338.90" width="0.7" height="26.60" fill="#9DB3A6" opacity="0.80"/>
<rect x="433.37" y="338.90" width="0.7" height="26.60" fill="#9DB3A6" opacity="0.80"/>
<rect x="447.01" y="338.90" width="0.7" height="26.60" fill="#9DB3A6" opacity="0.80"/>
<rect x="460.64" y="338.90" width="0.7" height="26.60" fill="#9DB3A6" opacity="0.80"/>
<rect x="474.28" y="338.90" width="0.7" height="26.60" fill="#B9B884" opacity="0.80"/>
<rect x="487.91" y="338.90" width="0.7" height="26.60" fill="#B9B884" opacity="0.80"/>
<rect x="501.55" y="338.90" width="0.7" height="26.60" fill="#9DB3A6" opacity="0.80"/>
<rect x="515.18" y="338.90" width="0.7" height="26.60" fill="#9DB3A6" opacity="0.80"/>
<rect x="528.82" y="338.90" width="0.7" height="26.60" fill="#B9B884" opacity="0.80"/>
<rect x="542.45" y="338.90" width="0.7" height="26.60" fill="#B9B884" opacity="0.80"/>
<rect x="556.08" y="338.90" width="0.7" height="26.60" fill="#9DB3A6" opacity="0.80"/>
<rect x="569.72" y="338.90" width="0.7" height="26.60" fill="#A9A628" opacity="0.85"/>
<rect x="583.35" y="338.90" width="0.7" height="26.60" fill="#9DB3A6" opacity="0.80"/>
<rect x="596.99" y="338.90" width="0.7" height="26.60" fill="#B9B884" opacity="0.80"/>
<rect x="610.62" y="338.90" width="0.7" height="26.60" fill="#9DB3A6" opacity="0.80"/>
<rect x="624.26" y="338.90" width="0.7" height="26.60" fill="#9DB3A6" opacity="0.80"/>
<rect x="637.89" y="338.90" width="0.7" height="26.60" fill="#B9B884" opacity="0.80"/>
<rect x="651.53" y="338.90" width="0.7" height="26.60" fill="#B9B884" opacity="0.80"/>
<rect x="665.16" y="338.90" width="0.7" height="26.60" fill="#9DB3A6" opacity="0.80"/>
<rect x="678.79" y="338.90" width="0.7" height="26.60" fill="#9DB3A6" opacity="0.80"/>
<rect x="692.43" y="338.90" width="0.7" height="26.60" fill="#9DB3A6" opacity="0.80"/>
<rect x="706.06" y="338.90" width="0.7" height="26.60" fill="#9DB3A6" opacity="0.80"/>
<rect x="719.70" y="338.90" width="0.7" height="26.60" fill="#9DB3A6" opacity="0.80"/>
<rect x="733.33" y="338.90" width="0.7" height="26.60" fill="#9DB3A6" opacity="0.80"/>
<rect x="746.97" y="338.90" width="0.7" height="26.60" fill="#9DB3A6" opacity="0.80"/>
<rect x="760.60" y="338.90" width="0.7" height="26.60" fill="#A9A628" opacity="0.85"/>
<rect x="774.24" y="338.90" width="0.7" height="26.60" fill="#A9A628" opacity="0.85"/>
<rect x="787.87" y="338.90" width="0.7" height="26.60" fill="#9DB3A6" opacity="0.80"/>
<rect x="801.51" y="338.90" width="0.7" height="26.60" fill="#B9B884" opacity="0.80"/>
<rect x="815.14" y="338.90" width="0.7" height="26.60" fill="#B9B884" opacity="0.80"/>
<rect x="828.77" y="338.90" width="0.7" height="26.60" fill="#B9B884" opacity="0.80"/>
<rect x="842.41" y="338.90" width="0.7" height="26.60" fill="#9DB3A6" opacity="0.80"/>
<rect x="856.04" y="338.90" width="0.7" height="26.60" fill="#A9A628" opacity="0.85"/>
<rect x="869.68" y="338.90" width="0.7" height="26.60" fill="#9DB3A6" opacity="0.80"/>
<rect x="883.31" y="338.90" width="0.7" height="26.60" fill="#B9B884" opacity="0.80"/>
<rect x="896.95" y="338.90" width="0.7" height="26.60" fill="#9DB3A6" opacity="0.80"/>
<rect x="910.58" y="338.90" width="0.7" height="26.60" fill="#9DB3A6" opacity="0.80"/>
<rect x="924.22" y="338.90" width="0.7" height="26.60" fill="#9DB3A6" opacity="0.80"/>
<rect x="937.85" y="338.90" width="0.7" height="26.60" fill="#A9A628" opacity="0.85"/>
<rect x="951.48" y="338.90" width="0.7" height="26.60" fill="#9DB3A6" opacity="0.80"/>
<rect x="965.12" y="338.90" width="0.7" height="26.60" fill="#B9B884" opacity="0.80"/>
<rect x="978.75" y="338.90" width="0.7" height="26.60" fill="#9DB3A6" opacity="0.80"/>
<rect x="992.39" y="338.90" width="0.7" height="26.60" fill="#9DB3A6" opacity="0.80"/>
<rect x="1006.02" y="338.90" width="0.7" height="26.60" fill="#9DB3A6" opacity="0.80"/>
<rect x="1019.66" y="338.90" width="0.7" height="26.60" fill="#9DB3A6" opacity="0.80"/>
<rect x="1033.29" y="338.90" width="0.7" height="26.60" fill="#9DB3A6" opacity="0.80"/>
<rect x="1046.93" y="338.90" width="0.7" height="26.60" fill="#A9A628" opacity="0.85"/>
<rect x="1060.56" y="338.90" width="0.7" height="26.60" fill="#9DB3A6" opacity="0.80"/>
<rect x="1074.19" y="338.90" width="0.7" height="26.60" fill="#B9B884" opacity="0.80"/>
<rect x="1087.83" y="338.90" width="0.7" height="26.60" fill="#9DB3A6" opacity="0.80"/>
<rect x="1101.46" y="338.90" width="0.7" height="26.60" fill="#9DB3A6" opacity="0.80"/>
<rect x="1115.10" y="338.90" width="0.7" height="26.60" fill="#9DB3A6" opacity="0.80"/>
<rect x="1128.73" y="338.90" width="0.7" height="26.60" fill="#9DB3A6" opacity="0.80"/>
<rect x="1142.37" y="338.90" width="0.7" height="26.60" fill="#9DB3A6" opacity="0.80"/>
<rect x="1156.00" y="338.90" width="0.7" height="26.60" fill="#A9A628" opacity="0.85"/>
<rect x="1169.64" y="338.90" width="0.7" height="26.60" fill="#A9A628" opacity="0.85"/>
<rect x="1183.27" y="338.90" width="0.7" height="26.60" fill="#A9A628" opacity="0.85"/>
<rect x="1196.91" y="338.90" width="0.7" height="26.60" fill="#A9A628" opacity="0.85"/>
<rect x="1210.54" y="338.90" width="0.7" height="26.60" fill="#9DB3A6" opacity="0.80"/>
<rect x="1224.17" y="338.90" width="0.7" height="26.60" fill="#B9B884" opacity="0.80"/>
<rect x="1237.81" y="338.90" width="0.7" height="26.60" fill="#9DB3A6" opacity="0.80"/>
<rect x="1251.44" y="338.90" width="0.7" height="26.60" fill="#9DB3A6" opacity="0.80"/>
<rect x="1265.08" y="338.90" width="0.7" height="26.60" fill="#B9B884" opacity="0.80"/>
<rect x="1278.71" y="338.90" width="0.7" height="26.60" fill="#9DB3A6" opacity="0.80"/>
<rect x="1292.35" y="338.90" width="0.7" height="26.60" fill="#A9A628" opacity="0.85"/>
<rect x="1305.98" y="338.90" width="0.7" height="26.60" fill="#9DB3A6" opacity="0.80"/>
<rect x="1319.62" y="338.90" width="0.7" height="26.60" fill="#9DB3A6" opacity="0.80"/>
<rect x="1333.25" y="338.90" width="0.7" height="26.60" fill="#9DB3A6" opacity="0.80"/>
<rect x="140.00" y="405.50" width="21.00" height="26.40" fill="#10407C"/>
<rect x="161.00" y="405.50" width="8.50" height="26.40" fill="#E01A14"/>
<rect x="169.50" y="405.50" width="13.90" height="26.40" fill="#008014"/>
<rect x="183.40" y="405.50" width="27.40" height="26.40" fill="#10407C"/>
<rect x="210.80" y="405.50" width="31.33" height="26.40" fill="#008014"/>
<rect x="242.13" y="405.50" width="13.63" height="26.40" fill="#10407C"/>
<rect x="255.76" y="405.50" width="13.63" height="26.40" fill="#008014"/>
<rect x="269.39" y="405.50" width="13.63" height="26.40" fill="#10407C"/>
<rect x="283.01" y="405.50" width="13.63" height="26.40" fill="#008014"/>
<rect x="296.64" y="405.50" width="13.63" height="26.40" fill="#10407C"/>
<rect x="310.27" y="405.50" width="13.63" height="26.40" fill="#008014"/>
<rect x="323.90" y="405.50" width="27.26" height="26.40" fill="#10407C"/>
<rect x="351.16" y="405.50" width="27.26" height="26.40" fill="#008014"/>
<rect x="378.41" y="405.50" width="13.63" height="26.40" fill="#10407C"/>
<rect x="392.04" y="405.50" width="13.63" height="26.40" fill="#008014"/>
<rect x="405.67" y="405.50" width="13.63" height="26.40" fill="#10407C"/>
<rect x="419.30" y="405.50" width="13.63" height="26.40" fill="#008014"/>
<rect x="432.93" y="405.50" width="27.26" height="26.40" fill="#10407C"/>
<rect x="460.18" y="405.50" width="13.63" height="26.40" fill="#008014"/>
<rect x="473.81" y="405.50" width="13.63" height="26.40" fill="#10407C"/>
<rect x="487.44" y="405.50" width="13.63" height="26.40" fill="#008014"/>
<rect x="501.07" y="405.50" width="13.63" height="26.40" fill="#10407C"/>
<rect x="514.70" y="405.50" width="13.63" height="26.40" fill="#008014"/>
<rect x="528.32" y="405.50" width="40.89" height="26.40" fill="#10407C"/>
<rect x="569.21" y="405.50" width="40.89" height="26.40" fill="#008014"/>
<rect x="610.10" y="405.50" width="27.26" height="26.40" fill="#10407C"/>
<rect x="637.35" y="405.50" width="13.63" height="26.40" fill="#008014"/>
<rect x="650.98" y="405.50" width="13.63" height="26.40" fill="#10407C"/>
<rect x="664.61" y="405.50" width="13.63" height="26.40" fill="#008014"/>
<rect x="678.24" y="405.50" width="27.26" height="26.40" fill="#10407C"/>
<rect x="705.49" y="405.50" width="13.63" height="26.40" fill="#008014"/>
<rect x="719.12" y="405.50" width="13.63" height="26.40" fill="#10407C"/>
<rect x="732.75" y="405.50" width="27.26" height="26.40" fill="#008014"/>
<rect x="760.01" y="405.50" width="13.63" height="26.40" fill="#10407C"/>
<rect x="773.64" y="405.50" width="40.89" height="26.40" fill="#008014"/>
<rect x="814.52" y="405.50" width="27.26" height="26.40" fill="#10407C"/>
<rect x="841.78" y="405.50" width="27.26" height="26.40" fill="#008014"/>
<rect x="869.03" y="405.50" width="13.63" height="26.40" fill="#10407C"/>
<rect x="882.66" y="405.50" width="68.14" height="26.40" fill="#008014"/>
<rect x="950.80" y="405.50" width="40.89" height="26.40" fill="#10407C"/>
<rect x="991.69" y="405.50" width="13.63" height="26.40" fill="#008014"/>
<rect x="1005.32" y="405.50" width="13.63" height="26.40" fill="#10407C"/>
<rect x="1018.95" y="405.50" width="40.89" height="26.40" fill="#008014"/>
<rect x="1059.83" y="405.50" width="27.26" height="26.40" fill="#10407C"/>
<rect x="1087.09" y="405.50" width="40.89" height="26.40" fill="#008014"/>
<rect x="1127.97" y="405.50" width="13.63" height="26.40" fill="#10407C"/>
<rect x="1141.60" y="405.50" width="40.89" height="26.40" fill="#008014"/>
<rect x="1182.49" y="405.50" width="13.63" height="26.40" fill="#10407C"/>
<rect x="1196.12" y="405.50" width="13.63" height="26.40" fill="#008014"/>
<rect x="1209.74" y="405.50" width="27.26" height="26.40" fill="#10407C"/>
<rect x="1237.00" y="405.50" width="13.63" height="26.40" fill="#008014"/>
<rect x="1250.63" y="405.50" width="13.63" height="26.40" fill="#10407C"/>
<rect x="1264.26" y="405.50" width="13.63" height="26.40" fill="#008014"/>
<rect x="1277.89" y="405.50" width="40.89" height="26.40" fill="#10407C"/>
<rect x="1318.77" y="405.50" width="13.63" height="26.40" fill="#008014"/>
<rect x="146.75" y="405.50" width="0.7" height="26.40" fill="#B9B884" opacity="0.80"/>
<rect x="182.85" y="405.50" width="0.7" height="26.40" fill="#9DB3A6" opacity="0.80"/>
<rect x="196.55" y="405.50" width="0.7" height="26.40" fill="#B9B884" opacity="0.80"/>
<rect x="210.25" y="405.50" width="0.7" height="26.40" fill="#9DB3A6" opacity="0.80"/>
<rect x="213.75" y="405.50" width="0.7" height="26.40" fill="#A9A628" opacity="0.85"/>
<rect x="227.95" y="405.50" width="0.7" height="26.40" fill="#A9A628" opacity="0.85"/>
<rect x="241.58" y="405.50" width="0.7" height="26.40" fill="#9DB3A6" opacity="0.80"/>
<rect x="255.21" y="405.50" width="0.7" height="26.40" fill="#9DB3A6" opacity="0.80"/>
<rect x="268.84" y="405.50" width="0.7" height="26.40" fill="#9DB3A6" opacity="0.80"/>
<rect x="282.46" y="405.50" width="0.7" height="26.40" fill="#9DB3A6" opacity="0.80"/>
<rect x="296.09" y="405.50" width="0.7" height="26.40" fill="#9DB3A6" opacity="0.80"/>
<rect x="309.72" y="405.50" width="0.7" height="26.40" fill="#9DB3A6" opacity="0.80"/>
<rect x="323.35" y="405.50" width="0.7" height="26.40" fill="#9DB3A6" opacity="0.80"/>
<rect x="336.98" y="405.50" width="0.7" height="26.40" fill="#B9B884" opacity="0.80"/>
<rect x="350.61" y="405.50" width="0.7" height="26.40" fill="#9DB3A6" opacity="0.80"/>
<rect x="364.23" y="405.50" width="0.7" height="26.40" fill="#A9A628" opacity="0.85"/>
<rect x="377.86" y="405.50" width="0.7" height="26.40" fill="#9DB3A6" opacity="0.80"/>
<rect x="391.49" y="405.50" width="0.7" height="26.40" fill="#9DB3A6" opacity="0.80"/>
<rect x="405.12" y="405.50" width="0.7" height="26.40" fill="#9DB3A6" opacity="0.80"/>
<rect x="418.75" y="405.50" width="0.7" height="26.40" fill="#9DB3A6" opacity="0.80"/>
<rect x="432.38" y="405.50" width="0.7" height="26.40" fill="#9DB3A6" opacity="0.80"/>
<rect x="446.00" y="405.50" width="0.7" height="26.40" fill="#B9B884" opacity="0.80"/>
<rect x="459.63" y="405.50" width="0.7" height="26.40" fill="#9DB3A6" opacity="0.80"/>
<rect x="473.26" y="405.50" width="0.7" height="26.40" fill="#9DB3A6" opacity="0.80"/>
<rect x="486.89" y="405.50" width="0.7" height="26.40" fill="#9DB3A6" opacity="0.80"/>
<rect x="500.52" y="405.50" width="0.7" height="26.40" fill="#9DB3A6" opacity="0.80"/>
<rect x="514.15" y="405.50" width="0.7" height="26.40" fill="#9DB3A6" opacity="0.80"/>
<rect x="527.77" y="405.50" width="0.7" height="26.40" fill="#9DB3A6" opacity="0.80"/>
<rect x="541.40" y="405.50" width="0.7" height="26.40" fill="#B9B884" opacity="0.80"/>
<rect x="555.03" y="405.50" width="0.7" height="26.40" fill="#B9B884" opacity="0.80"/>
<rect x="568.66" y="405.50" width="0.7" height="26.40" fill="#9DB3A6" opacity="0.80"/>
<rect x="582.29" y="405.50" width="0.7" height="26.40" fill="#A9A628" opacity="0.85"/>
<rect x="595.92" y="405.50" width="0.7" height="26.40" fill="#A9A628" opacity="0.85"/>
<rect x="609.55" y="405.50" width="0.7" height="26.40" fill="#9DB3A6" opacity="0.80"/>
<rect x="623.17" y="405.50" width="0.7" height="26.40" fill="#B9B884" opacity="0.80"/>
<rect x="636.80" y="405.50" width="0.7" height="26.40" fill="#9DB3A6" opacity="0.80"/>
<rect x="650.43" y="405.50" width="0.7" height="26.40" fill="#9DB3A6" opacity="0.80"/>
<rect x="664.06" y="405.50" width="0.7" height="26.40" fill="#9DB3A6" opacity="0.80"/>
<rect x="677.69" y="405.50" width="0.7" height="26.40" fill="#9DB3A6" opacity="0.80"/>
<rect x="691.32" y="405.50" width="0.7" height="26.40" fill="#B9B884" opacity="0.80"/>
<rect x="704.94" y="405.50" width="0.7" height="26.40" fill="#9DB3A6" opacity="0.80"/>
<rect x="718.57" y="405.50" width="0.7" height="26.40" fill="#9DB3A6" opacity="0.80"/>
<rect x="732.20" y="405.50" width="0.7" height="26.40" fill="#9DB3A6" opacity="0.80"/>
<rect x="745.83" y="405.50" width="0.7" height="26.40" fill="#A9A628" opacity="0.85"/>
<rect x="759.46" y="405.50" width="0.7" height="26.40" fill="#9DB3A6" opacity="0.80"/>
<rect x="773.09" y="405.50" width="0.7" height="26.40" fill="#9DB3A6" opacity="0.80"/>
<rect x="786.71" y="405.50" width="0.7" height="26.40" fill="#A9A628" opacity="0.85"/>
<rect x="800.34" y="405.50" width="0.7" height="26.40" fill="#A9A628" opacity="0.85"/>
<rect x="813.97" y="405.50" width="0.7" height="26.40" fill="#9DB3A6" opacity="0.80"/>
<rect x="827.60" y="405.50" width="0.7" height="26.40" fill="#B9B884" opacity="0.80"/>
<rect x="841.23" y="405.50" width="0.7" height="26.40" fill="#9DB3A6" opacity="0.80"/>
<rect x="854.86" y="405.50" width="0.7" height="26.40" fill="#A9A628" opacity="0.85"/>
<rect x="868.48" y="405.50" width="0.7" height="26.40" fill="#9DB3A6" opacity="0.80"/>
<rect x="882.11" y="405.50" width="0.7" height="26.40" fill="#9DB3A6" opacity="0.80"/>
<rect x="895.74" y="405.50" width="0.7" height="26.40" fill="#A9A628" opacity="0.85"/>
<rect x="909.37" y="405.50" width="0.7" height="26.40" fill="#A9A628" opacity="0.85"/>
<rect x="923.00" y="405.50" width="0.7" height="26.40" fill="#A9A628" opacity="0.85"/>
<rect x="936.63" y="405.50" width="0.7" height="26.40" fill="#A9A628" opacity="0.85"/>
<rect x="950.25" y="405.50" width="0.7" height="26.40" fill="#9DB3A6" opacity="0.80"/>
<rect x="963.88" y="405.50" width="0.7" height="26.40" fill="#B9B884" opacity="0.80"/>
<rect x="977.51" y="405.50" width="0.7" height="26.40" fill="#B9B884" opacity="0.80"/>
<rect x="991.14" y="405.50" width="0.7" height="26.40" fill="#9DB3A6" opacity="0.80"/>
<rect x="1004.77" y="405.50" width="0.7" height="26.40" fill="#9DB3A6" opacity="0.80"/>
<rect x="1018.40" y="405.50" width="0.7" height="26.40" fill="#9DB3A6" opacity="0.80"/>
<rect x="1032.03" y="405.50" width="0.7" height="26.40" fill="#A9A628" opacity="0.85"/>
<rect x="1045.65" y="405.50" width="0.7" height="26.40" fill="#A9A628" opacity="0.85"/>
<rect x="1059.28" y="405.50" width="0.7" height="26.40" fill="#9DB3A6" opacity="0.80"/>
<rect x="1072.91" y="405.50" width="0.7" height="26.40" fill="#B9B884" opacity="0.80"/>
<rect x="1086.54" y="405.50" width="0.7" height="26.40" fill="#9DB3A6" opacity="0.80"/>
<rect x="1100.17" y="405.50" width="0.7" height="26.40" fill="#A9A628" opacity="0.85"/>
<rect x="1113.80" y="405.50" width="0.7" height="26.40" fill="#A9A628" opacity="0.85"/>
<rect x="1127.42" y="405.50" width="0.7" height="26.40" fill="#9DB3A6" opacity="0.80"/>
<rect x="1141.05" y="405.50" width="0.7" height="26.40" fill="#9DB3A6" opacity="0.80"/>
<rect x="1154.68" y="405.50" width="0.7" height="26.40" fill="#A9A628" opacity="0.85"/>
<rect x="1168.31" y="405.50" width="0.7" height="26.40" fill="#A9A628" opacity="0.85"/>
<rect x="1181.94" y="405.50" width="0.7" height="26.40" fill="#9DB3A6" opacity="0.80"/>
<rect x="1195.57" y="405.50" width="0.7" height="26.40" fill="#9DB3A6" opacity="0.80"/>
<rect x="1209.19" y="405.50" width="0.7" height="26.40" fill="#9DB3A6" opacity="0.80"/>
<rect x="1222.82" y="405.50" width="0.7" height="26.40" fill="#B9B884" opacity="0.80"/>
<rect x="1236.45" y="405.50" width="0.7" height="26.40" fill="#9DB3A6" opacity="0.80"/>
<rect x="1250.08" y="405.50" width="0.7" height="26.40" fill="#9DB3A6" opacity="0.80"/>
<rect x="1263.71" y="405.50" width="0.7" height="26.40" fill="#9DB3A6" opacity="0.80"/>
<rect x="1277.34" y="405.50" width="0.7" height="26.40" fill="#9DB3A6" opacity="0.80"/>
<rect x="1290.96" y="405.50" width="0.7" height="26.40" fill="#B9B884" opacity="0.80"/>
<rect x="1304.59" y="405.50" width="0.7" height="26.40" fill="#B9B884" opacity="0.80"/>
<rect x="1318.22" y="405.50" width="0.7" height="26.40" fill="#9DB3A6" opacity="0.80"/>
<rect x="1346.3" y="186" width="1.5" height="266" fill="#BDF0B4"/>
<rect x="139" y="186" width="1" height="266" fill="#262626"/>
<rect x="139" y="451" width="1208" height="1" fill="#262626"/>
<rect x="139" y="206.0" width="1" height="26.5" fill="#857D3C"/>
<rect x="147.1" y="206.0" width="0.6" height="26.5" fill="#D9CC7A" opacity="0.8"/>
<rect x="139" y="338.9" width="1" height="26.6" fill="#857D3C"/>
<rect x="147.1" y="338.9" width="0.6" height="26.6" fill="#D9CC7A" opacity="0.8"/>
<rect x="139" y="405.5" width="1" height="26.4" fill="#56633F"/>
<text x="139.2" y="470.2" text-anchor="middle" class="tk">0</text>
<text x="259.3" y="470.2" text-anchor="middle" class="tk">0.05</text>
<text x="379.4" y="470.2" text-anchor="middle" class="tk">0.1</text>
<text x="499.5" y="470.2" text-anchor="middle" class="tk">0.15</text>
<text x="619.6" y="470.2" text-anchor="middle" class="tk">0.2</text>
<text x="739.7" y="470.2" text-anchor="middle" class="tk">0.25</text>
<text x="859.8" y="470.2" text-anchor="middle" class="tk">0.3</text>
<text x="979.9" y="470.2" text-anchor="middle" class="tk">0.35</text>
<text x="1100.0" y="470.2" text-anchor="middle" class="tk">0.4</text>
<text x="1220.1" y="470.2" text-anchor="middle" class="tk">0.45</text>
<text x="1340.2" y="470.2" text-anchor="middle" class="tk">0.5</text>
<text x="743" y="488.7" text-anchor="middle" class="al">Time (s)</text>
<text x="743.5" y="178.6" text-anchor="middle" class="tb" style="word-spacing:0.7px">State Transitions Of Nodes</text>
<text x="134.2" y="224.2" text-anchor="end" class="tk">STA2 6085 MHz</text>
<text x="134.2" y="290.8" text-anchor="end" class="tk">STA1 6065 MHz</text>
<text x="134.2" y="357.2" text-anchor="end" class="tk">AP2 6085 MHz</text>
<text x="134.2" y="423.7" text-anchor="end" class="tk">AP1 6065 MHz</text>
<circle cx="1331.6" cy="174.6" r="1.45" fill="#5e5e5e"/>
<circle cx="1337.5" cy="174.6" r="1.45" fill="#5e5e5e"/>
<circle cx="1343.5" cy="174.6" r="1.45" fill="#5e5e5e"/>
<circle cx="1331.6" cy="546.4" r="1.45" fill="#5e5e5e"/>
<circle cx="1337.5" cy="546.4" r="1.45" fill="#5e5e5e"/>
<circle cx="1343.5" cy="546.4" r="1.45" fill="#5e5e5e"/>
<text x="1373" y="187.2" class="lb">Operating States</text>
<rect x="1373" y="203" width="50" height="20" fill="#BEBEBE"/>
<text x="1433" y="217.2" class="lg">Sleep</text>
<rect x="1373" y="233" width="50" height="20" fill="#FFFFFF"/>
<text x="1433" y="247.2" class="lg">Listen</text>
<rect x="1373" y="263" width="50" height="20" fill="#10407C"/>
<text x="1433" y="277.2" class="lg">Transmission</text>
<rect x="1373" y="293" width="50" height="20" fill="#008014"/>
<text x="1433" y="307.2" class="lg">Reception Success</text>
<rect x="1373" y="323" width="50" height="20" fill="#E01A14"/>
<text x="1433" y="337.2" class="lg">Reception Failure</text>
<rect x="1373" y="353" width="50" height="20" fill="#C8FFBE"/>
<text x="1433" y="367.2" class="lg">Reception Others</text>
<rect x="1373" y="383" width="50" height="20" fill="#EDB120"/>
<text x="1433" y="397.2" class="lg">Contention</text>
<rect x="139" y="557.6" width="1208" height="266.4" fill="#ffffff"/>
<rect x="139" y="557" width="1" height="267" fill="#262626"/>
<rect x="139" y="795.8" width="1194.3" height="21.4" fill="#FFE566"/>
<rect x="1333.3" y="795.8" width="13.2" height="21.4" fill="#FFEE99"/>
<rect x="161.2" y="795.8" width="8.3" height="21.4" fill="#FFDB33"/>
<rect x="169.8" y="795.8" width="5.6" height="10.6" fill="#FFEC94"/>
<rect x="187.90" y="795.8" width="0.8" height="10.6" fill="#FFF3B8" opacity="0.9"/>
<rect x="201.54" y="795.8" width="0.8" height="10.6" fill="#FFF3B8" opacity="0.9"/>
<rect x="215.17" y="795.8" width="0.8" height="10.6" fill="#FFF3B8" opacity="0.9"/>
<rect x="228.81" y="795.8" width="0.8" height="10.6" fill="#FFF3B8" opacity="0.9"/>
<rect x="242.44" y="795.8" width="0.8" height="10.6" fill="#FFF3B8" opacity="0.9"/>
<rect x="256.08" y="795.8" width="0.8" height="10.6" fill="#FFF3B8" opacity="0.9"/>
<rect x="269.71" y="795.8" width="0.8" height="10.6" fill="#FFF3B8" opacity="0.9"/>
<rect x="283.34" y="795.8" width="0.8" height="10.6" fill="#FFF3B8" opacity="0.9"/>
<rect x="296.98" y="795.8" width="0.8" height="10.6" fill="#FFF3B8" opacity="0.9"/>
<rect x="310.61" y="795.8" width="0.8" height="10.6" fill="#FFF3B8" opacity="0.9"/>
<rect x="324.25" y="795.8" width="0.8" height="10.6" fill="#FFF3B8" opacity="0.9"/>
<rect x="337.88" y="795.8" width="0.8" height="10.6" fill="#FFF3B8" opacity="0.9"/>
<rect x="351.52" y="795.8" width="0.8" height="10.6" fill="#FFF3B8" opacity="0.9"/>
<rect x="365.15" y="795.8" width="0.8" height="10.6" fill="#FFF3B8" opacity="0.9"/>
<rect x="378.79" y="795.8" width="0.8" height="10.6" fill="#FFF3B8" opacity="0.9"/>
<rect x="392.42" y="795.8" width="0.8" height="10.6" fill="#FFF3B8" opacity="0.9"/>
<rect x="406.06" y="795.8" width="0.8" height="10.6" fill="#FFF3B8" opacity="0.9"/>
<rect x="419.69" y="795.8" width="0.8" height="10.6" fill="#FFF3B8" opacity="0.9"/>
<rect x="433.32" y="795.8" width="0.8" height="10.6" fill="#FFF3B8" opacity="0.9"/>
<rect x="446.96" y="795.8" width="0.8" height="10.6" fill="#FFF3B8" opacity="0.9"/>
<rect x="460.59" y="795.8" width="0.8" height="10.6" fill="#FFF3B8" opacity="0.9"/>
<rect x="474.23" y="795.8" width="0.8" height="10.6" fill="#FFF3B8" opacity="0.9"/>
<rect x="487.86" y="795.8" width="0.8" height="10.6" fill="#FFF3B8" opacity="0.9"/>
<rect x="501.50" y="795.8" width="0.8" height="10.6" fill="#FFF3B8" opacity="0.9"/>
<rect x="515.13" y="795.8" width="0.8" height="10.6" fill="#FFF3B8" opacity="0.9"/>
<rect x="528.77" y="795.8" width="0.8" height="10.6" fill="#FFF3B8" opacity="0.9"/>
<rect x="542.40" y="795.8" width="0.8" height="10.6" fill="#FFF3B8" opacity="0.9"/>
<rect x="556.03" y="795.8" width="0.8" height="10.6" fill="#FFF3B8" opacity="0.9"/>
<rect x="569.67" y="795.8" width="0.8" height="10.6" fill="#FFF3B8" opacity="0.9"/>
<rect x="583.30" y="795.8" width="0.8" height="10.6" fill="#FFF3B8" opacity="0.9"/>
<rect x="596.94" y="795.8" width="0.8" height="10.6" fill="#FFF3B8" opacity="0.9"/>
<rect x="610.57" y="795.8" width="0.8" height="10.6" fill="#FFF3B8" opacity="0.9"/>
<rect x="624.21" y="795.8" width="0.8" height="10.6" fill="#FFF3B8" opacity="0.9"/>
<rect x="637.84" y="795.8" width="0.8" height="10.6" fill="#FFF3B8" opacity="0.9"/>
<rect x="651.48" y="795.8" width="0.8" height="10.6" fill="#FFF3B8" opacity="0.9"/>
<rect x="665.11" y="795.8" width="0.8" height="10.6" fill="#FFF3B8" opacity="0.9"/>
<rect x="678.74" y="795.8" width="0.8" height="10.6" fill="#FFF3B8" opacity="0.9"/>
<rect x="692.38" y="795.8" width="0.8" height="10.6" fill="#FFF3B8" opacity="0.9"/>
<rect x="706.01" y="795.8" width="0.8" height="10.6" fill="#FFF3B8" opacity="0.9"/>
<rect x="719.65" y="795.8" width="0.8" height="10.6" fill="#FFF3B8" opacity="0.9"/>
<rect x="733.28" y="795.8" width="0.8" height="10.6" fill="#FFF3B8" opacity="0.9"/>
<rect x="746.92" y="795.8" width="0.8" height="10.6" fill="#FFF3B8" opacity="0.9"/>
<rect x="760.55" y="795.8" width="0.8" height="10.6" fill="#FFF3B8" opacity="0.9"/>
<rect x="774.19" y="795.8" width="0.8" height="10.6" fill="#FFF3B8" opacity="0.9"/>
<rect x="787.82" y="795.8" width="0.8" height="10.6" fill="#FFF3B8" opacity="0.9"/>
<rect x="801.46" y="795.8" width="0.8" height="10.6" fill="#FFF3B8" opacity="0.9"/>
<rect x="815.09" y="795.8" width="0.8" height="10.6" fill="#FFF3B8" opacity="0.9"/>
<rect x="828.72" y="795.8" width="0.8" height="10.6" fill="#FFF3B8" opacity="0.9"/>
<rect x="842.36" y="795.8" width="0.8" height="10.6" fill="#FFF3B8" opacity="0.9"/>
<rect x="855.99" y="795.8" width="0.8" height="10.6" fill="#FFF3B8" opacity="0.9"/>
<rect x="869.63" y="795.8" width="0.8" height="10.6" fill="#FFF3B8" opacity="0.9"/>
<rect x="883.26" y="795.8" width="0.8" height="10.6" fill="#FFF3B8" opacity="0.9"/>
<rect x="896.90" y="795.8" width="0.8" height="10.6" fill="#FFF3B8" opacity="0.9"/>
<rect x="910.53" y="795.8" width="0.8" height="10.6" fill="#FFF3B8" opacity="0.9"/>
<rect x="924.17" y="795.8" width="0.8" height="10.6" fill="#FFF3B8" opacity="0.9"/>
<rect x="937.80" y="795.8" width="0.8" height="10.6" fill="#FFF3B8" opacity="0.9"/>
<rect x="951.43" y="795.8" width="0.8" height="10.6" fill="#FFF3B8" opacity="0.9"/>
<rect x="965.07" y="795.8" width="0.8" height="10.6" fill="#FFF3B8" opacity="0.9"/>
<rect x="978.70" y="795.8" width="0.8" height="10.6" fill="#FFF3B8" opacity="0.9"/>
<rect x="992.34" y="795.8" width="0.8" height="10.6" fill="#FFF3B8" opacity="0.9"/>
<rect x="1005.97" y="795.8" width="0.8" height="10.6" fill="#FFF3B8" opacity="0.9"/>
<rect x="1019.61" y="795.8" width="0.8" height="10.6" fill="#FFF3B8" opacity="0.9"/>
<rect x="1033.24" y="795.8" width="0.8" height="10.6" fill="#FFF3B8" opacity="0.9"/>
<rect x="1046.88" y="795.8" width="0.8" height="10.6" fill="#FFF3B8" opacity="0.9"/>
<rect x="1060.51" y="795.8" width="0.8" height="10.6" fill="#FFF3B8" opacity="0.9"/>
<rect x="1074.14" y="795.8" width="0.8" height="10.6" fill="#FFF3B8" opacity="0.9"/>
<rect x="1087.78" y="795.8" width="0.8" height="10.6" fill="#FFF3B8" opacity="0.9"/>
<rect x="1101.41" y="795.8" width="0.8" height="10.6" fill="#FFF3B8" opacity="0.9"/>
<rect x="1115.05" y="795.8" width="0.8" height="10.6" fill="#FFF3B8" opacity="0.9"/>
<rect x="1128.68" y="795.8" width="0.8" height="10.6" fill="#FFF3B8" opacity="0.9"/>
<rect x="1142.32" y="795.8" width="0.8" height="10.6" fill="#FFF3B8" opacity="0.9"/>
<rect x="1155.95" y="795.8" width="0.8" height="10.6" fill="#FFF3B8" opacity="0.9"/>
<rect x="1169.59" y="795.8" width="0.8" height="10.6" fill="#FFF3B8" opacity="0.9"/>
<rect x="1183.22" y="795.8" width="0.8" height="10.6" fill="#FFF3B8" opacity="0.9"/>
<rect x="1196.86" y="795.8" width="0.8" height="10.6" fill="#FFF3B8" opacity="0.9"/>
<rect x="1210.49" y="795.8" width="0.8" height="10.6" fill="#FFF3B8" opacity="0.9"/>
<rect x="1224.12" y="795.8" width="0.8" height="10.6" fill="#FFF3B8" opacity="0.9"/>
<rect x="1237.76" y="795.8" width="0.8" height="10.6" fill="#FFF3B8" opacity="0.9"/>
<rect x="1251.39" y="795.8" width="0.8" height="10.6" fill="#FFF3B8" opacity="0.9"/>
<rect x="1265.03" y="795.8" width="0.8" height="10.6" fill="#FFF3B8" opacity="0.9"/>
<rect x="1278.66" y="795.8" width="0.8" height="10.6" fill="#FFF3B8" opacity="0.9"/>
<rect x="1292.30" y="795.8" width="0.8" height="10.6" fill="#FFF3B8" opacity="0.9"/>
<rect x="1305.93" y="795.8" width="0.8" height="10.6" fill="#FFF3B8" opacity="0.9"/>
<rect x="1319.57" y="795.8" width="0.8" height="10.6" fill="#FFF3B8" opacity="0.9"/>
<rect x="1333.20" y="795.8" width="0.8" height="10.6" fill="#FFF3B8" opacity="0.9"/>
<rect x="146.70" y="806.4" width="0.8" height="10.8" fill="#FFF3B8" opacity="0.9"/>
<rect x="160.40" y="806.4" width="0.8" height="10.8" fill="#FFF3B8" opacity="0.9"/>
<rect x="168.90" y="806.4" width="0.8" height="10.8" fill="#FFF3B8" opacity="0.9"/>
<rect x="182.80" y="806.4" width="0.8" height="10.8" fill="#FFF3B8" opacity="0.9"/>
<rect x="196.50" y="806.4" width="0.8" height="10.8" fill="#FFF3B8" opacity="0.9"/>
<rect x="210.20" y="806.4" width="0.8" height="10.8" fill="#FFF3B8" opacity="0.9"/>
<rect x="213.70" y="806.4" width="0.8" height="10.8" fill="#FFF3B8" opacity="0.9"/>
<rect x="227.90" y="806.4" width="0.8" height="10.8" fill="#FFF3B8" opacity="0.9"/>
<rect x="241.53" y="806.4" width="0.8" height="10.8" fill="#FFF3B8" opacity="0.9"/>
<rect x="255.16" y="806.4" width="0.8" height="10.8" fill="#FFF3B8" opacity="0.9"/>
<rect x="268.79" y="806.4" width="0.8" height="10.8" fill="#FFF3B8" opacity="0.9"/>
<rect x="282.41" y="806.4" width="0.8" height="10.8" fill="#FFF3B8" opacity="0.9"/>
<rect x="296.04" y="806.4" width="0.8" height="10.8" fill="#FFF3B8" opacity="0.9"/>
<rect x="309.67" y="806.4" width="0.8" height="10.8" fill="#FFF3B8" opacity="0.9"/>
<rect x="323.30" y="806.4" width="0.8" height="10.8" fill="#FFF3B8" opacity="0.9"/>
<rect x="336.93" y="806.4" width="0.8" height="10.8" fill="#FFF3B8" opacity="0.9"/>
<rect x="350.56" y="806.4" width="0.8" height="10.8" fill="#FFF3B8" opacity="0.9"/>
<rect x="364.18" y="806.4" width="0.8" height="10.8" fill="#FFF3B8" opacity="0.9"/>
<rect x="377.81" y="806.4" width="0.8" height="10.8" fill="#FFF3B8" opacity="0.9"/>
<rect x="391.44" y="806.4" width="0.8" height="10.8" fill="#FFF3B8" opacity="0.9"/>
<rect x="405.07" y="806.4" width="0.8" height="10.8" fill="#FFF3B8" opacity="0.9"/>
<rect x="418.70" y="806.4" width="0.8" height="10.8" fill="#FFF3B8" opacity="0.9"/>
<rect x="432.33" y="806.4" width="0.8" height="10.8" fill="#FFF3B8" opacity="0.9"/>
<rect x="445.95" y="806.4" width="0.8" height="10.8" fill="#FFF3B8" opacity="0.9"/>
<rect x="459.58" y="806.4" width="0.8" height="10.8" fill="#FFF3B8" opacity="0.9"/>
<rect x="473.21" y="806.4" width="0.8" height="10.8" fill="#FFF3B8" opacity="0.9"/>
<rect x="486.84" y="806.4" width="0.8" height="10.8" fill="#FFF3B8" opacity="0.9"/>
<rect x="500.47" y="806.4" width="0.8" height="10.8" fill="#FFF3B8" opacity="0.9"/>
<rect x="514.10" y="806.4" width="0.8" height="10.8" fill="#FFF3B8" opacity="0.9"/>
<rect x="527.72" y="806.4" width="0.8" height="10.8" fill="#FFF3B8" opacity="0.9"/>
<rect x="541.35" y="806.4" width="0.8" height="10.8" fill="#FFF3B8" opacity="0.9"/>
<rect x="554.98" y="806.4" width="0.8" height="10.8" fill="#FFF3B8" opacity="0.9"/>
<rect x="568.61" y="806.4" width="0.8" height="10.8" fill="#FFF3B8" opacity="0.9"/>
<rect x="582.24" y="806.4" width="0.8" height="10.8" fill="#FFF3B8" opacity="0.9"/>
<rect x="595.87" y="806.4" width="0.8" height="10.8" fill="#FFF3B8" opacity="0.9"/>
<rect x="609.50" y="806.4" width="0.8" height="10.8" fill="#FFF3B8" opacity="0.9"/>
<rect x="623.12" y="806.4" width="0.8" height="10.8" fill="#FFF3B8" opacity="0.9"/>
<rect x="636.75" y="806.4" width="0.8" height="10.8" fill="#FFF3B8" opacity="0.9"/>
<rect x="650.38" y="806.4" width="0.8" height="10.8" fill="#FFF3B8" opacity="0.9"/>
<rect x="664.01" y="806.4" width="0.8" height="10.8" fill="#FFF3B8" opacity="0.9"/>
<rect x="677.64" y="806.4" width="0.8" height="10.8" fill="#FFF3B8" opacity="0.9"/>
<rect x="691.27" y="806.4" width="0.8" height="10.8" fill="#FFF3B8" opacity="0.9"/>
<rect x="704.89" y="806.4" width="0.8" height="10.8" fill="#FFF3B8" opacity="0.9"/>
<rect x="718.52" y="806.4" width="0.8" height="10.8" fill="#FFF3B8" opacity="0.9"/>
<rect x="732.15" y="806.4" width="0.8" height="10.8" fill="#FFF3B8" opacity="0.9"/>
<rect x="745.78" y="806.4" width="0.8" height="10.8" fill="#FFF3B8" opacity="0.9"/>
<rect x="759.41" y="806.4" width="0.8" height="10.8" fill="#FFF3B8" opacity="0.9"/>
<rect x="773.04" y="806.4" width="0.8" height="10.8" fill="#FFF3B8" opacity="0.9"/>
<rect x="786.66" y="806.4" width="0.8" height="10.8" fill="#FFF3B8" opacity="0.9"/>
<rect x="800.29" y="806.4" width="0.8" height="10.8" fill="#FFF3B8" opacity="0.9"/>
<rect x="813.92" y="806.4" width="0.8" height="10.8" fill="#FFF3B8" opacity="0.9"/>
<rect x="827.55" y="806.4" width="0.8" height="10.8" fill="#FFF3B8" opacity="0.9"/>
<rect x="841.18" y="806.4" width="0.8" height="10.8" fill="#FFF3B8" opacity="0.9"/>
<rect x="854.81" y="806.4" width="0.8" height="10.8" fill="#FFF3B8" opacity="0.9"/>
<rect x="868.43" y="806.4" width="0.8" height="10.8" fill="#FFF3B8" opacity="0.9"/>
<rect x="882.06" y="806.4" width="0.8" height="10.8" fill="#FFF3B8" opacity="0.9"/>
<rect x="895.69" y="806.4" width="0.8" height="10.8" fill="#FFF3B8" opacity="0.9"/>
<rect x="909.32" y="806.4" width="0.8" height="10.8" fill="#FFF3B8" opacity="0.9"/>
<rect x="922.95" y="806.4" width="0.8" height="10.8" fill="#FFF3B8" opacity="0.9"/>
<rect x="936.58" y="806.4" width="0.8" height="10.8" fill="#FFF3B8" opacity="0.9"/>
<rect x="950.20" y="806.4" width="0.8" height="10.8" fill="#FFF3B8" opacity="0.9"/>
<rect x="963.83" y="806.4" width="0.8" height="10.8" fill="#FFF3B8" opacity="0.9"/>
<rect x="977.46" y="806.4" width="0.8" height="10.8" fill="#FFF3B8" opacity="0.9"/>
<rect x="991.09" y="806.4" width="0.8" height="10.8" fill="#FFF3B8" opacity="0.9"/>
<rect x="1004.72" y="806.4" width="0.8" height="10.8" fill="#FFF3B8" opacity="0.9"/>
<rect x="1018.35" y="806.4" width="0.8" height="10.8" fill="#FFF3B8" opacity="0.9"/>
<rect x="1031.98" y="806.4" width="0.8" height="10.8" fill="#FFF3B8" opacity="0.9"/>
<rect x="1045.60" y="806.4" width="0.8" height="10.8" fill="#FFF3B8" opacity="0.9"/>
<rect x="1059.23" y="806.4" width="0.8" height="10.8" fill="#FFF3B8" opacity="0.9"/>
<rect x="1072.86" y="806.4" width="0.8" height="10.8" fill="#FFF3B8" opacity="0.9"/>
<rect x="1086.49" y="806.4" width="0.8" height="10.8" fill="#FFF3B8" opacity="0.9"/>
<rect x="1100.12" y="806.4" width="0.8" height="10.8" fill="#FFF3B8" opacity="0.9"/>
<rect x="1113.75" y="806.4" width="0.8" height="10.8" fill="#FFF3B8" opacity="0.9"/>
<rect x="1127.37" y="806.4" width="0.8" height="10.8" fill="#FFF3B8" opacity="0.9"/>
<rect x="1141.00" y="806.4" width="0.8" height="10.8" fill="#FFF3B8" opacity="0.9"/>
<rect x="1154.63" y="806.4" width="0.8" height="10.8" fill="#FFF3B8" opacity="0.9"/>
<rect x="1168.26" y="806.4" width="0.8" height="10.8" fill="#FFF3B8" opacity="0.9"/>
<rect x="1181.89" y="806.4" width="0.8" height="10.8" fill="#FFF3B8" opacity="0.9"/>
<rect x="1195.52" y="806.4" width="0.8" height="10.8" fill="#FFF3B8" opacity="0.9"/>
<rect x="1209.14" y="806.4" width="0.8" height="10.8" fill="#FFF3B8" opacity="0.9"/>
<rect x="1222.77" y="806.4" width="0.8" height="10.8" fill="#FFF3B8" opacity="0.9"/>
<rect x="1236.40" y="806.4" width="0.8" height="10.8" fill="#FFF3B8" opacity="0.9"/>
<rect x="1250.03" y="806.4" width="0.8" height="10.8" fill="#FFF3B8" opacity="0.9"/>
<rect x="1263.66" y="806.4" width="0.8" height="10.8" fill="#FFF3B8" opacity="0.9"/>
<rect x="1277.29" y="806.4" width="0.8" height="10.8" fill="#FFF3B8" opacity="0.9"/>
<rect x="1290.91" y="806.4" width="0.8" height="10.8" fill="#FFF3B8" opacity="0.9"/>
<rect x="1304.54" y="806.4" width="0.8" height="10.8" fill="#FFF3B8" opacity="0.9"/>
<rect x="1318.17" y="806.4" width="0.8" height="10.8" fill="#FFF3B8" opacity="0.9"/>
<rect x="1331.80" y="806.4" width="0.8" height="10.8" fill="#FFF3B8" opacity="0.9"/>
<rect x="147.0" y="795.8" width="0.8" height="10.6" fill="#FFF3B8" opacity="0.9"/>
<rect x="1346.3" y="558" width="1.5" height="265" fill="#BDF0B4"/>
<rect x="139" y="823" width="1208" height="1" fill="#262626"/>
<rect x="259.0" y="811" width="1" height="12" fill="#262626"/>
<rect x="379.0" y="811" width="1" height="12" fill="#262626"/>
<rect x="499.0" y="811" width="1" height="12" fill="#262626"/>
<rect x="620.0" y="811" width="1" height="12" fill="#262626"/>
<rect x="740.0" y="811" width="1" height="12" fill="#262626"/>
<rect x="860.0" y="811" width="1" height="12" fill="#262626"/>
<rect x="980.0" y="811" width="1" height="12" fill="#262626"/>
<rect x="1100.0" y="811" width="1" height="12" fill="#262626"/>
<rect x="1220.0" y="811" width="1" height="12" fill="#262626"/>
<rect x="1340.0" y="811" width="1" height="12" fill="#262626"/>
<rect x="140" y="557.0" width="12" height="1" fill="#262626"/>
<text x="133.8" y="563.2" text-anchor="end" class="tk">7000</text>
<rect x="140" y="611.0" width="12" height="1" fill="#262626"/>
<text x="133.8" y="616.1" text-anchor="end" class="tk">6800</text>
<rect x="140" y="664.0" width="12" height="1" fill="#262626"/>
<text x="133.8" y="669.1" text-anchor="end" class="tk">6600</text>
<rect x="140" y="717.0" width="12" height="1" fill="#262626"/>
<text x="133.8" y="722.7" text-anchor="end" class="tk">6400</text>
<rect x="140" y="770.0" width="12" height="1" fill="#262626"/>
<text x="133.8" y="776.1" text-anchor="end" class="tk">6200</text>
<text x="133.8" y="828.9" text-anchor="end" class="tk">6000</text>
<text x="139.2" y="842.2" text-anchor="middle" class="tk">0</text>
<text x="259.3" y="842.2" text-anchor="middle" class="tk">0.05</text>
<text x="379.4" y="842.2" text-anchor="middle" class="tk">0.1</text>
<text x="499.5" y="842.2" text-anchor="middle" class="tk">0.15</text>
<text x="619.6" y="842.2" text-anchor="middle" class="tk">0.2</text>
<text x="739.7" y="842.2" text-anchor="middle" class="tk">0.25</text>
<text x="859.8" y="842.2" text-anchor="middle" class="tk">0.3</text>
<text x="979.9" y="842.2" text-anchor="middle" class="tk">0.35</text>
<text x="1100.0" y="842.2" text-anchor="middle" class="tk">0.4</text>
<text x="1220.1" y="842.2" text-anchor="middle" class="tk">0.45</text>
<text x="1340.2" y="842.2" text-anchor="middle" class="tk">0.5</text>
<text x="743" y="860.7" text-anchor="middle" class="al">Time (s)</text>
<text x="742.7" y="550.6" text-anchor="middle" class="tb" style="font-size:15.92px;word-spacing:0.3px">Channel Occupancy</text>
<text transform="translate(94.6,691.6) rotate(-90)" text-anchor="middle" class="al">Frequency (MHz)</text>
<text x="1373" y="560.2" class="lb">Node Types</text>
<rect x="1373" y="575" width="50" height="20" fill="#FFD60A"/>
<text x="1433" y="590.0" class="lg">WLAN</text>
</svg>
</body>
</html>
